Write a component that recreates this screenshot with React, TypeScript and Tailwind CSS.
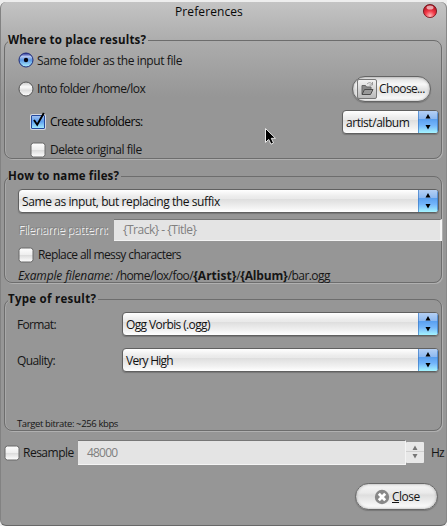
import React from "react";
import clsx from "clsx";

function Group({ title, titleClass, className, children }: { title: string; titleClass?: string; className: string; children: React.ReactNode }) {
  return (
    <fieldset className={clsx("ml-1 w-[438px] min-w-0 rounded-[8px] border border-[#6d6d6d] shadow-[1px_1px_0_#b0b0b0,inset_1px_0_0_#a8a8a8]", className)}>
      <legend className={clsx("ml-[3px] h-4 whitespace-nowrap pr-[2px] text-[11.5px] leading-4 font-bold text-[#111]", titleClass)}>{title}</legend>
      {children}
    </fieldset>
  );
}

function Radio({ checked }: { checked?: boolean }) {
  return (
    <svg width="16" height="16" viewBox="0 0 16 16" className="shrink-0">
      <defs>
        <linearGradient id="radioBlue" x1="0" y1="0" x2="0" y2="1">
          <stop offset="0" stopColor="#18208c" />
          <stop offset=".25" stopColor="#b4c6f0" />
          <stop offset=".5" stopColor="#5a96e4" />
          <stop offset="1" stopColor="#b0f4ff" />
        </linearGradient>
        <linearGradient id="radioWhite" x1="0" y1="0" x2="0" y2="1">
          <stop offset="0" stopColor="#c8c8c8" />
          <stop offset=".35" stopColor="#fafafa" />
          <stop offset=".6" stopColor="#dedede" />
          <stop offset="1" stopColor="#fff" />
        </linearGradient>
      </defs>
      <circle cx="8" cy="8" r="7" fill={checked ? "url(#radioBlue)" : "url(#radioWhite)"} stroke={checked ? "#1d2a78" : "#555"} />
      {checked && <circle cx="8" cy="8" r="2.2" fill="#050510" />}
    </svg>
  );
}

function Check({ checked }: { checked?: boolean }) {
  return (
    <svg width="16" height="16" viewBox="0 0 16 16" className="shrink-0 overflow-visible">
      <defs>
        <linearGradient id="checkBlue" x1="0" y1="0" x2="0" y2="1">
          <stop offset="0" stopColor="#a5c3f0" />
          <stop offset=".45" stopColor="#5d9ff0" />
          <stop offset="1" stopColor="#a6efff" />
        </linearGradient>
        <linearGradient id="checkWhite" x1="0" y1="0" x2="0" y2="1">
          <stop offset="0" stopColor="#fff" />
          <stop offset=".48" stopColor="#eee" />
          <stop offset=".52" stopColor="#dcdcdc" />
          <stop offset="1" stopColor="#fff" />
        </linearGradient>
      </defs>
      {checked && <rect x="0" y="0" width="16" height="16" rx="2" fill="#d4d8e0" />}
      <rect x={checked ? 1.5 : 1} y={checked ? 1.5 : 1} width={checked ? 13 : 14} height={checked ? 13 : 14} rx={checked ? 0.5 : 2.5} fill={checked ? "url(#checkBlue)" : "url(#checkWhite)"} stroke={checked ? "#23489c" : "#686868"} />
      {checked && <path d="M4 6L7.200 10.800L13.800 -1" fill="none" stroke="#000" strokeWidth="1.900" />}
    </svg>
  );
}

function Combo({ text, className, textClass }: { text: string; className: string; textClass: string }) {
  return (
    <div className={clsx("flex h-[24px] shrink-0 overflow-hidden rounded-[4px] border border-[#606060] bg-[linear-gradient(#fff,#ececec_30%,#e9e9e9_40%,#dedede_42%,#f2f2f2_80%,#fff)] shadow-[0_1px_1px_#777]", className)}>
      <div className={clsx("flex-1 whitespace-nowrap pl-[3px] text-[12px] leading-[23px] text-[#111]", textClass)}>{text}</div>
      <svg width="20" height="22" viewBox="0 0 20 22">
        <defs>
          <linearGradient id="comboBlue" x1="0" y1="0" x2="0" y2="1">
            <stop offset="0" stopColor="#b5d0f4" />
            <stop offset=".36" stopColor="#8db9f0" />
            <stop offset=".37" stopColor="#5a9fef" />
            <stop offset=".65" stopColor="#74b5fa" />
            <stop offset="1" stopColor="#a5f4ff" />
          </linearGradient>
        </defs>
        <rect width="20" height="22" fill="url(#comboBlue)" />
        <path d="M.5 0V22M19.5 0V22" stroke="#3c7cc8" opacity=".7" />
        <path d="M7.500 7.500L10 3L12.500 7.500ZM7.500 14L10 18.500L12.500 14Z" fill="#000" />
      </svg>
    </div>
  );
}

function FolderIcon() {
  return (
    <svg width="20" height="20" viewBox="0 0 20 20" className="shrink-0">
      <defs>
        <linearGradient id="folderBack" x1="0" y1="0" x2="0" y2="1">
          <stop offset="0" stopColor="#f4f4f4" />
          <stop offset="1" stopColor="#b8b8b8" />
        </linearGradient>
      </defs>
      <rect x=".5" y=".5" width="19" height="19" rx="1.5" fill="url(#folderBack)" stroke="#777" />
      <path d="M5 15V6.500h3.500l1 1.500h4.500V10" fill="#888" stroke="#666" />
      <path d="M5 15.500L7.500 10.500h8.500l-2.500 5Z" fill="#999" stroke="#4c4c4c" />
      <path d="M10 5c2-2 4-1.500 5 0M15.500 3v3h-3" fill="none" stroke="#999" />
    </svg>
  );
}

export default function App() {
  return (
    <div className="relative h-[526px] w-[447px] overflow-hidden bg-[#eeeeee] pt-[2px] font-['Open_Sans','Noto_Sans',sans-serif] text-[12px] text-[#151515]">
      <div className="flex h-[524px] flex-col rounded-t-[6px] rounded-b-[6px] border-b border-l border-b-[#686868] border-l-[#828282] bg-[linear-gradient(#c4c4c4,#adadad_38px,#969696_95px,#969696)] pr-[4px] shadow-[inset_-1px_0_0_#888]">
        <header className="flex h-[30px] shrink-0 items-start">
          <h1 className="w-[416px] whitespace-nowrap pl-[174px] text-[12px] leading-[19px] tracking-[0.1px] text-[#080808]">Preferences</h1>
          <svg width="18" height="18" viewBox="0 0 18 18" className="ml-[4px]">
            <defs>
              <radialGradient id="closeRed" cx=".5" cy=".85" r=".8">
                <stop offset="0" stopColor="#ffb8b8" />
                <stop offset=".45" stopColor="#f23a48" />
                <stop offset="1" stopColor="#a80f1c" />
              </radialGradient>
            </defs>
            <circle cx="9" cy="9" r="6.600" fill="url(#closeRed)" stroke="#6c1018" strokeWidth=".8" />
            <ellipse cx="9" cy="5.500" rx="3.500" ry="2" fill="#fff" opacity=".6" />
          </svg>
        </header>

        <div className="-ml-px flex flex-col">
          <Group title="Where to place results?" titleClass="tracking-[0.18px]" className="h-[127px]">
            <div className="flex h-[24px] items-center pl-[13px]">
              <Radio checked />
              <span className="ml-[3px] whitespace-nowrap pt-px tracking-[-0.41px]">Same folder as the input file</span>
            </div>
            <div className="flex h-[34px] items-center pl-[13px]">
              <Radio />
              <span className="ml-[3px] whitespace-nowrap tracking-[-0.54px]">Into folder /home/lox</span>
              <button className="mr-[10px] ml-auto flex h-[26px] w-[79px] items-center rounded-full border border-[#646464] bg-[linear-gradient(#ddd,#f8f8f8_30%,#e0e0e0_55%,#fff)] pl-[4px] shadow-[inset_0_0_3px_#999,0_1px_1px_#777]">
                <FolderIcon />
                <span className="ml-[2px] whitespace-nowrap tracking-[-0.62px]">Choose...</span>
              </button>
            </div>
            <div className="flex h-[31px] items-center pl-[25px]">
              <Check checked />
              <span className="ml-[4px] whitespace-nowrap tracking-[-0.55px] text-[#050505]">Create subfolders:</span>
              <Combo text="artist/album" className="mr-[2px] ml-auto w-[97px]" textClass="tracking-[-0.45px]" />
            </div>
            <div className="flex h-[24px] items-center pl-[25px] pt-px">
              <Check />
              <span className="ml-[4px] whitespace-nowrap tracking-[-0.47px]">Delete original file</span>
            </div>
          </Group>

          <Group title="How to name files?" titleClass="tracking-[0.12px]" className="mt-[9px] h-[115px]">
            <Combo text="Same as input, but replacing the suffix" className="mt-[5px] ml-[13px] w-[421px]" textClass="tracking-[-0.41px]" />
            <div className="mt-[6px] flex h-[22px] items-center">
              <span className="w-[109px] shrink-0 whitespace-nowrap pl-[13px] tracking-[-0.55px] text-[#858585] [text-shadow:1px_1px_0_#f0f0f0]">Filename pattern:</span>
              <div className="h-[22px] w-[328px] shrink-0 border-t border-r-2 border-b border-t-[#777] border-r-[#f4f4f4] border-b-[#f4f4f4] bg-[#e4e4e4] pl-[9px] leading-[20px] tracking-[-0.5px] text-[#808080]">{"{Track} - {Title}"}</div>
            </div>
            <div className="mt-[5px] flex h-[18px] items-center pl-[13px]">
              <Check />
              <span className="ml-[4px] whitespace-nowrap tracking-[-0.6px]">Replace all messy characters</span>
            </div>
            <p className="mt-[3px] whitespace-nowrap pl-[13px] leading-[17px] tracking-[-0.55px]">
              <i className="tracking-[-0.14px]">Example filename: </i>/home/lox/foo/<b className="tracking-[0px]">{"{Artist}"}</b>/<b className="tracking-[-0.18px]">{"{Album}"}</b>/bar.ogg
            </p>
          </Group>

          <Group title="Type of result?" titleClass="tracking-[0.27px]" className="mt-[8px] h-[140px]">
            <div className="mt-[5px] flex h-[24px] items-center">
              <span className="w-[117px] shrink-0 pl-[12px] pt-px tracking-[-0.65px]">Format:</span>
              <Combo text="Ogg Vorbis (.ogg)" className="w-[317px]" textClass="tracking-[-0.62px]" />
            </div>
            <div className="mt-[12px] flex h-[24px] items-center">
              <span className="w-[117px] shrink-0 pl-[12px] pt-px tracking-[-0.6px]">Quality:</span>
              <Combo text="Very High" className="w-[317px]" textClass="tracking-[-0.75px]" />
            </div>
            <p className="mt-[45px] pl-[12px] text-[9.5px] leading-[13px] tracking-[-0.38px]">Target bitrate: ~256 kbps</p>
          </Group>

          <div className="mt-[9px] flex h-[25px] items-center pl-[4px]">
            <Check />
            <span className="ml-[3px] w-[55px] shrink-0 whitespace-nowrap tracking-[-0.5px]">Resample</span>
            <div className="h-[25px] w-[328px] shrink-0 border-t border-r border-b border-t-[#777] border-r-[#f4f4f4] border-b-[#f4f4f4] bg-[#e4e4e4] pl-[9px] leading-[23px] tracking-[-0.8px] text-[#808080]">48000</div>
            <svg width="18" height="21" viewBox="0 0 18 21" className="shrink-0">
              <rect width="18" height="21" rx="1" fill="#e8e8e8" />
              <path d="M0 9.500H18" stroke="#d0d0d0" />
              <path d="M6.500 8L9 3.500L11.500 8ZM6.500 12L9 16.500L11.500 12Z" fill="#777" />
            </svg>
            <span className="ml-[7px] tracking-[-0.8px]">Hz</span>
          </div>

          <button className="mt-[18px] ml-[355px] flex h-[27px] w-[83px] items-center rounded-full border border-[#686868] bg-[linear-gradient(#f8f8f8,#eaeaea_35%,#dedede_45%,#fff)] pl-[19px] shadow-[inset_0_0_3px_#999,0_1px_1px_#777]">
            <svg width="16" height="16" viewBox="0 0 16 16" className="-ml-px shrink-0">
              <circle cx="8" cy="8" r="7.200" fill="#888" />
              <path d="M4.800 4.800L11.200 11.200M11.200 4.800L4.800 11.200" stroke="#fff" strokeWidth="2.800" />
            </svg>
            <span className="ml-[2px] tracking-[-0.5px]"><u>C</u>lose</span>
          </button>
        </div>
      </div>
      <svg width="14" height="20" viewBox="0 0 14 20" className="absolute top-[127px] left-[264px]">
        <path d="M1.500 1.500V15.500L4.700 12.400L7 17.200L9.500 16L7.300 11.300H11.500Z" fill="#000" stroke="#e8e8e8" />
      </svg>
    </div>
  );
}
